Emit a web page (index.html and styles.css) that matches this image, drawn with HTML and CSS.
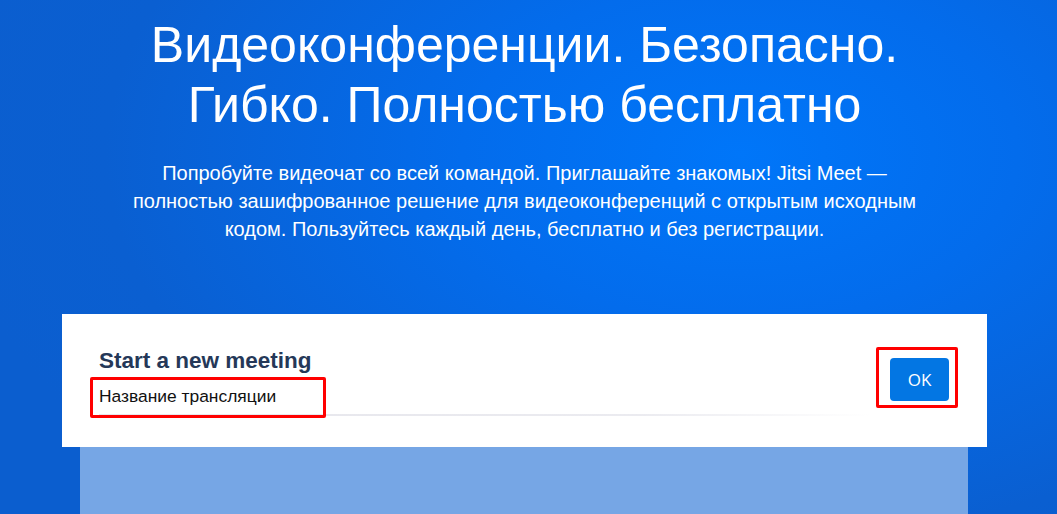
FILE: index.html
```html
<!DOCTYPE html>
<html lang="ru">
<head>
<meta charset="utf-8">
<title>Jitsi Meet</title>
<link rel="stylesheet" href="styles.css">
</head>
<body>
<div class="page">
  <header class="hero">
    <h1 class="title">Видеоконференции. Безопасно.<br>Гибко. Полностью бесплатно</h1>
    <p class="lead">Попробуйте видеочат со всей командой. Приглашайте знакомых! Jitsi Meet — полностью зашифрованное решение для видеоконференций с открытым исходным кодом. Пользуйтесь каждый день, бесплатно и без регистрации.</p>
  </header>
  <div class="stage">
    <section class="card">
      <div class="form">
        <h2 class="heading">Start a new meeting</h2>
        <div class="field">Название трансляции</div>
      </div>
      <button class="ok">OK</button>
      <span class="mark mark-field"></span>
      <span class="mark mark-ok"></span>
    </section>
    <div class="panel"></div>
  </div>
</div>
</body>
</html>
```

FILE: styles.css
```css
html, body {
  margin: 0;
  padding: 0;
  height: 100%;
}
body {
  background: radial-gradient(ellipse 75% 95% at 70% 30%, #0076f9 0%, #036cec 35%, #0a5fd1 80%, #0b5ecf 100%);
  font-family: "Liberation Sans", Arial, sans-serif;
  color: #fff;
  overflow: hidden;
}
.page {
  display: flex;
  flex-direction: column;
  height: 100%;
}
.hero {
  display: flex;
  flex-direction: column;
  align-items: center;
  padding-top: 15px;
  padding-right: 8px;
}
.title {
  margin: 0;
  font-weight: 400;
  font-size: 50px;
  line-height: 60px;
  text-align: center;
  white-space: nowrap;
}
.lead {
  margin: 24px 0 0;
  width: 800px;
  font-size: 20px;
  line-height: 28px;
  text-align: center;
}
.stage {
  margin-top: 71px;
  margin-left: 62px;
  width: 925px;
  display: flex;
  flex-direction: column;
  flex: 1;
}
.card {
  position: relative;
  background: #fff;
  height: 133px;
  flex: none;
  box-sizing: border-box;
  padding: 0 38px 0 37px;
  display: flex;
  align-items: center;
  justify-content: space-between;
}
.form {
  display: flex;
  flex-direction: column;
  width: 771px;
  padding-top: 3px;
}
.heading {
  margin: 0;
  font-size: 22.5px;
  line-height: 26px;
  font-weight: 700;
  color: #253858;
}
.field {
  margin-top: 12px;
  font-size: 17.4px;
  line-height: 20px;
  color: #111;
  padding-bottom: 8px;
  border-bottom: 2px solid transparent;
  border-image: linear-gradient(to right, #e6e6ec 0%, #ebebf0 70%, #ffffff 100%) 1;
}
.ok {
  width: 59px;
  height: 43px;
  border: 0;
  border-radius: 4px;
  background: #0376e3;
  color: #fff;
  font-family: "Open Sans", "Liberation Sans", sans-serif;
  font-size: 17px;
  padding: 0;
  margin-top: -2px;
}
.mark {
  position: absolute;
  border: 3px solid #ff0000;
  border-radius: 2px;
  box-sizing: border-box;
}
.mark-field {
  left: 28px;
  top: 63px;
  width: 236px;
  height: 41px;
}
.mark-ok {
  left: 814px;
  top: 33px;
  width: 82px;
  height: 61px;
}
.panel {
  margin: 0 19px 0 18px;
  flex: 1;
  background: #76a6e5;
}
```
